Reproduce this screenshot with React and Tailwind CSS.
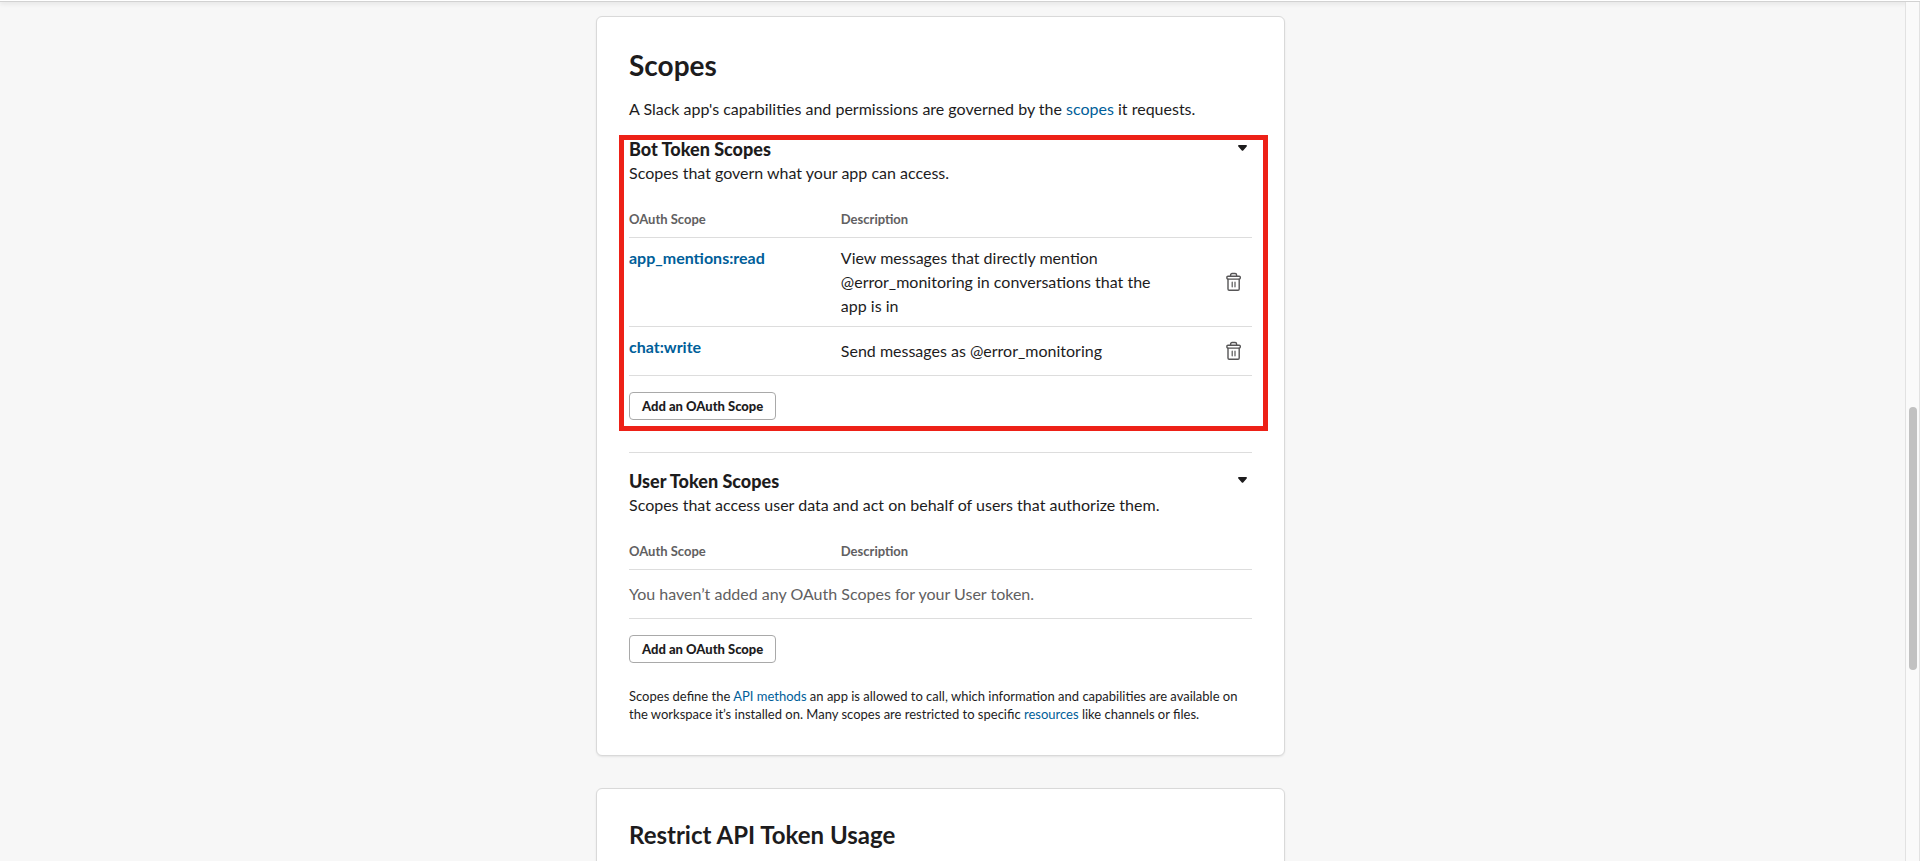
import { useState } from "react";

const botScopes = [
  {
    name: "app_mentions:read",
    description:
      "View messages that directly mention @error_monitoring in conversations that the app is in",
  },
  { name: "chat:write", description: "Send messages as @error_monitoring" },
];

function TextLink({ children }) {
  return (
    <a href="#" className="text-[#005e99] hover:underline">
      {children}
    </a>
  );
}

function TrashIcon() {
  return (
    <svg
      width="16"
      height="20"
      viewBox="0 0 16 20"
      fill="none"
      stroke="#565556"
      strokeWidth="1.4"
      strokeLinejoin="round"
      strokeLinecap="round"
      aria-hidden="true"
    >
      <path d="M4.6 4V3c0-.9.6-1.5 1.5-1.5h3c.9 0 1.5.6 1.5 1.5v1" />
      <rect x=".9" y="4.2" width="13.4" height="2.9" rx="1.1" />
      <path d="M2 7.2v9.9c0 .7.5 1.2 1.2 1.2H12c.7 0 1.2-.5 1.2-1.2V7.2" />
      <path d="M6.2 10.2v4.6M9 10.2v4.6" strokeWidth="1.2" />
    </svg>
  );
}

function CaretIcon() {
  return (
    <svg width="9" height="6" viewBox="0 0 9 6" fill="#1d1c1d" aria-hidden="true">
      <path d="M.9 0h7.2c.8 0 1.1.8.6 1.4L5.2 5.4c-.4.5-1 .5-1.4 0L.3 1.4C-.2.8.1 0 .9 0z" />
    </svg>
  );
}

function ScopeTable({ scopes, emptyText }) {
  return (
    <table className="mt-6 w-full table-fixed border-collapse text-left">
      <colgroup>
        <col className="w-[34%]" />
        <col />
        <col className="w-9" />
      </colgroup>
      <thead>
        <tr className="border-b border-[#dddddd] text-[13px] leading-5 text-[#616061]">
          <th className="pb-2 font-bold">OAuth Scope</th>
          <th className="pb-2 font-bold" colSpan={2}>
            Description
          </th>
        </tr>
      </thead>
      <tbody>
        {scopes.map((scope) => (
          <tr key={scope.name} className="border-b border-[#dddddd]">
            <td className="py-2 align-top font-bold">
              <TextLink>{scope.name}</TextLink>
            </td>
            <td className="py-2 pr-10 align-middle">{scope.description}</td>
            <td className="py-2 align-middle">
              <button
                type="button"
                aria-label={`Remove ${scope.name}`}
                className="flex h-8 w-9 items-center justify-center"
              >
                <TrashIcon />
              </button>
            </td>
          </tr>
        ))}
        {scopes.length === 0 && (
          <tr className="border-b border-[#dddddd]">
            <td colSpan={3} className="py-3 text-[#616061]">
              {emptyText}
            </td>
          </tr>
        )}
      </tbody>
    </table>
  );
}

function ScopeSection({ title, subtitle, scopes, emptyText, highlighted }) {
  const [open, setOpen] = useState(true);
  return (
    <section className="relative">
      <div className="flex items-start justify-between">
        <h3 className="text-lg leading-6 font-black">{title}</h3>
        <button
          type="button"
          aria-label={`Toggle ${title}`}
          aria-expanded={open}
          onClick={() => setOpen(!open)}
          className="flex h-6 w-5 items-center justify-center pb-0.5"
        >
          <CaretIcon />
        </button>
      </div>
      <p>{subtitle}</p>
      {open && (
        <>
          <ScopeTable scopes={scopes} emptyText={emptyText} />
          <button
            type="button"
            className="mt-4 flex h-7 items-center rounded border border-[#a9a9a9] bg-white px-3 text-[13px] leading-5 font-black"
          >
            Add an OAuth Scope
          </button>
        </>
      )}
      {highlighted && (
        <div className="pointer-events-none absolute -top-0.5 -right-4 -bottom-[11px] -left-2.5 border-5 border-[#ed2117]" />
      )}
    </section>
  );
}

function Card({ children }) {
  return (
    <article className="rounded-md border border-[#d9d9d9] bg-white p-8 shadow-[0_1px_2px_rgba(0,0,0,0.08)]">
      {children}
    </article>
  );
}

export default function App() {
  return (
    <div className="flex h-screen flex-col overflow-hidden bg-[#f7f7f7] font-['Lato',sans-serif] text-base leading-6 text-[#1d1c1d]">
      <header className="z-10 h-0.5 shrink-0 border-b border-[#d2d2d2] bg-white shadow-[0_1px_5px_rgba(0,0,0,0.16)]" />
      <div className="flex min-h-0 flex-1">
        <main className="flex min-w-0 flex-1 justify-center overflow-hidden pt-3.5 pr-6">
          <div className="flex w-full max-w-[689px] flex-col gap-8">
            <Card>
              <h1 className="mb-4 text-[28px] leading-8 font-bold">Scopes</h1>
              <p className="mb-4">
                A Slack app's capabilities and permissions are governed by the{" "}
                <TextLink>scopes</TextLink> it requests.
              </p>
              <ScopeSection
                title="Bot Token Scopes"
                subtitle="Scopes that govern what your app can access."
                scopes={botScopes}
                highlighted
              />
              <hr className="mt-8 mb-4 border-[#dddddd]" />
              <ScopeSection
                title="User Token Scopes"
                subtitle="Scopes that access user data and act on behalf of users that authorize them."
                scopes={[]}
                emptyText="You haven’t added any OAuth Scopes for your User token."
              />
              <p className="mt-6 text-[13px] leading-[18px]">
                Scopes define the <TextLink>API methods</TextLink> an app is allowed to call, which
                information and capabilities are available on the workspace it’s installed on. Many
                scopes are restricted to specific <TextLink>resources</TextLink> like channels or
                files.
              </p>
            </Card>
            <Card>
              <h2 className="mb-4 text-2xl leading-7 font-bold">Restrict API Token Usage</h2>
            </Card>
          </div>
        </main>
        <div className="z-20 flex w-[15px] flex-col items-center border-x border-[#e2e2e2] bg-[#fafafa]">
          <div className="h-[405px] shrink" />
          <div className="h-[263px] w-2 shrink-0 rounded-full bg-[#c1c1c1]" />
        </div>
      </div>
    </div>
  );
}
